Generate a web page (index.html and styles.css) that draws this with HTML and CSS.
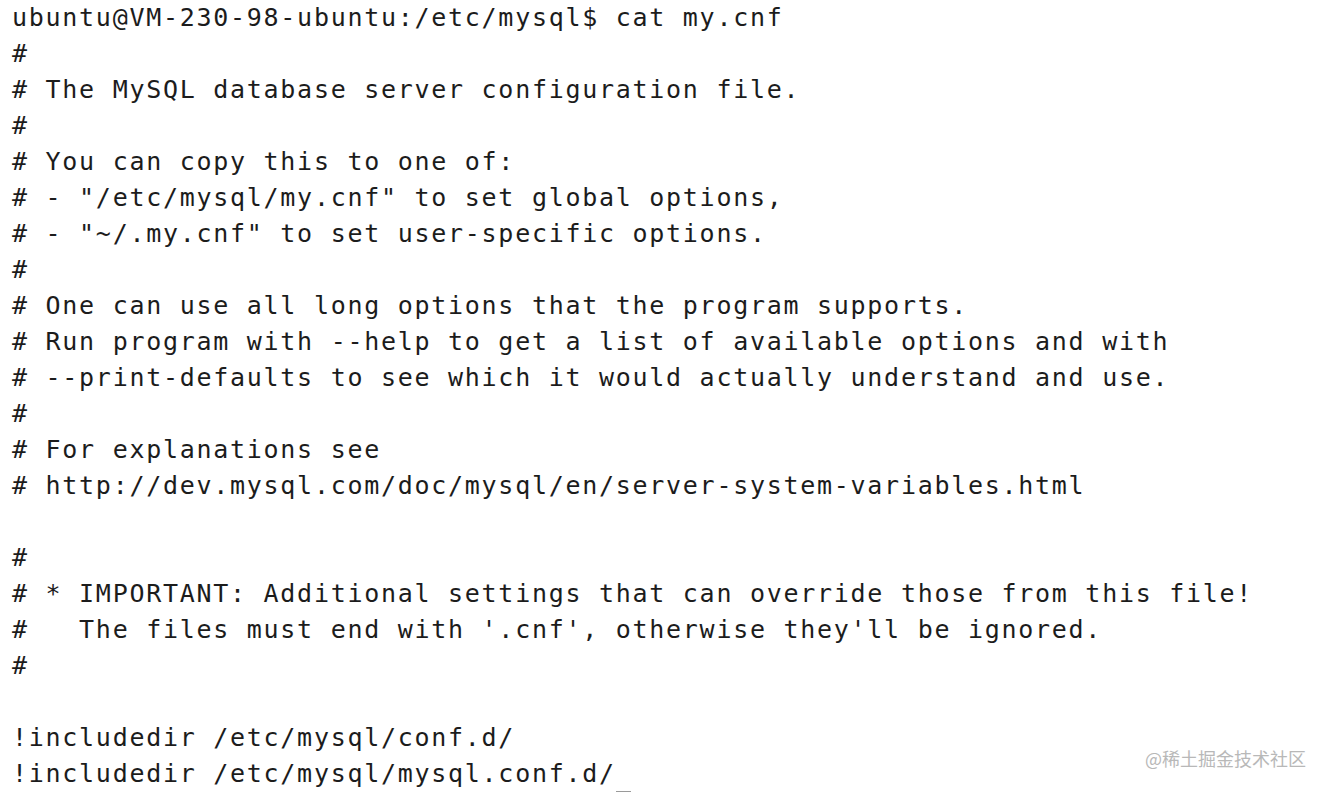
FILE: index.html
```html
<!DOCTYPE html>
<html>
<head>
<meta charset="utf-8">
<link rel="stylesheet" href="styles.css">
</head>
<body>
<div class="screen">
<div class="term">
<div class="ln">ubuntu@VM-230-98-ubuntu:/etc/mysql$ cat my.cnf</div>
<div class="ln">#</div>
<div class="ln"># The MySQL database server configuration file.</div>
<div class="ln">#</div>
<div class="ln"># You can copy this to one of:</div>
<div class="ln"># - "/etc/mysql/my.cnf" to set global options,</div>
<div class="ln"># - "~/.my.cnf" to set user-specific options.</div>
<div class="ln">#</div>
<div class="ln"># One can use all long options that the program supports.</div>
<div class="ln"># Run program with --help to get a list of available options and with</div>
<div class="ln"># --print-defaults to see which it would actually understand and use.</div>
<div class="ln">#</div>
<div class="ln"># For explanations see</div>
<div class="ln"># http://dev.mysql.com/doc/mysql/en/server-system-variables.html</div>
<div class="ln blank"></div>
<div class="ln">#</div>
<div class="ln"># * IMPORTANT: Additional settings that can override those from this file!</div>
<div class="ln">#   The files must end with '.cnf', otherwise they'll be ignored.</div>
<div class="ln">#</div>
<div class="ln blank"></div>
<div class="ln">!includedir /etc/mysql/conf.d/</div>
<div class="ln">!includedir /etc/mysql/mysql.conf.d/<span class="cursor"></span></div>
</div>
<div class="watermark">@稀土掘金技术社区</div>
</div>
</body>
</html>
```
FILE: styles.css
```css
html, body {
  margin: 0;
  padding: 0;
  background: #ffffff;
}
.screen {
  position: relative;
  width: 1326px;
  height: 792px;
  overflow: hidden;
}
.term {
  display: flex;
  flex-direction: column;
  align-items: flex-start;
  padding-left: 12px;
  font-family: "DejaVu Sans Mono", "Liberation Mono", monospace;
  font-size: 25px;
  letter-spacing: 1.72px;
  line-height: 36px;
  color: #1c1c1c;
}
.ln {
  white-space: pre;
  height: 36px;
}
.cursor {
  display: inline-block;
  width: 15px;
  height: 5px;
  background: #9a9a9a;
  vertical-align: -14px;
}
.watermark {
  position: absolute;
  right: 20px;
  bottom: 21px;
  font-family: "Noto Sans CJK SC", "Noto Sans", sans-serif;
  font-size: 18px;
  color: #b8b8b8;
}
```
